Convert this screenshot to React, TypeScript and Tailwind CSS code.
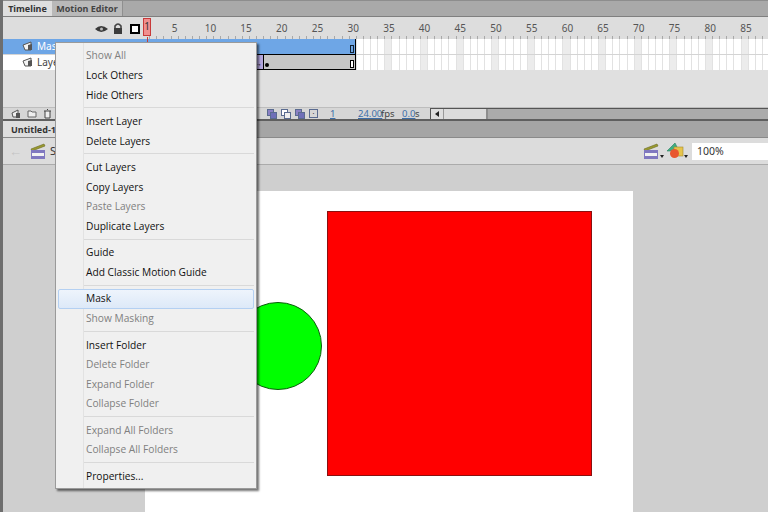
import React from 'react';

const FRAME_W = 'w-[7.14px] shrink-0';
const frames = Array.from({ length: 89 }, (_, i) => i + 1);
const rulerLabels = [5, 10, 15, 20, 25, 30, 35, 40, 45, 50, 55, 60, 65, 70, 75, 80, 85];

const menuGroups: { label: string; disabled?: boolean; hover?: boolean }[][] = [
  [{ label: 'Show All', disabled: true }, { label: 'Lock Others' }, { label: 'Hide Others' }],
  [{ label: 'Insert Layer' }, { label: 'Delete Layers' }],
  [{ label: 'Cut Layers' }, { label: 'Copy Layers' }, { label: 'Paste Layers', disabled: true }, { label: 'Duplicate Layers' }],
  [{ label: 'Guide' }, { label: 'Add Classic Motion Guide' }],
  [{ label: 'Mask', hover: true }, { label: 'Show Masking', disabled: true }],
  [{ label: 'Insert Folder' }, { label: 'Delete Folder', disabled: true }, { label: 'Expand Folder', disabled: true }, { label: 'Collapse Folder', disabled: true }],
  [{ label: 'Expand All Folders', disabled: true }, { label: 'Collapse All Folders', disabled: true }],
  [{ label: 'Properties...' }],
];

function LayerIcon() {
  return (
    <svg width="12" height="12" viewBox="0 0 12 12" className="shrink-0">
      <path d="M1 5 L9 2 V10 H3 Z" fill="#f4f4f4" stroke="#555" strokeWidth="1" />
      <path d="M6 5 V10 H10 V4" fill="#555" />
    </svg>
  );
}

function ContextMenu() {
  return (
    <div className="absolute left-[55px] top-[42px] w-[202px] h-[447px] pt-[3.2px] bg-[#f0f0f0] border border-[#9a9a9a] shadow-[2px_2px_2px_rgba(0,0,0,0.55)] font-['Open_Sans',sans-serif] text-[10.2px]">
      <div className="absolute left-[27px] top-0 bottom-0 w-px bg-[#e2e2e2]" />
      {menuGroups.map((group, g) => (
        <div key={g}>
          {g > 0 && (
            <div className="h-[6.9px] flex items-center pl-[28px] pr-[2px]">
              <div className="w-full h-[2px] border-t border-[#d9d9d9] border-b-white" />
            </div>
          )}
          {group.map((item) => (
            <div
              key={item.label}
              className={`relative h-[19.6px] flex items-center pl-[30px] ${item.disabled ? 'text-[#808080]' : 'text-[#111]'}`}
            >
              {item.hover && (
                <div className="absolute left-[2px] right-[2px] top-0 bottom-0 rounded-[2px] border border-[#b4d0f2] bg-gradient-to-b from-[#eef4fc] to-[#dde9f8]" />
              )}
              <span className="relative">{item.label}</span>
            </div>
          ))}
        </div>
      ))}
    </div>
  );
}

function FrameRow({ border }: { border?: boolean }) {
  return (
    <div className={`flex h-[15.5px] ${border ? 'border-b border-[#d4d4d4]' : ''}`}>
      {frames.map((f) => (
        <div
          key={f}
          className={`${FRAME_W} h-full border-r border-[#e2e2e2] ${f % 5 === 0 ? 'bg-[#ececec]' : 'bg-white'}`}
        />
      ))}
    </div>
  );
}

function Timeline() {
  return (
    <div className="h-[121px] flex flex-col bg-[#e0e0e0] shrink-0">
      {/* tabs */}
      <div className="h-[16px] flex bg-[#a9a9a9] border-t border-[#8d8d8d] text-[9px] font-bold leading-none shrink-0">
        <div className="w-[49px] h-full bg-[#dedede] text-[#333] flex items-center justify-center">Timeline</div>
        <div className="w-[71px] h-full bg-[#b9b9b9] text-[#444] flex items-center justify-center border-r border-[#8f8f8f]">Motion Editor</div>
      </div>

      {/* ruler */}
      <div className="relative h-[23px] bg-[#dddddd] border-t border-[#7f7f7f] shrink-0">
        <div className="absolute left-[92px] top-[8px]">
          <svg width="13" height="8" viewBox="0 0 13 8"><path d="M0 4 Q6 -2 13 4 Q6 10 0 4Z" fill="#3a3a3a" /><circle cx="6.5" cy="4" r="1.5" fill="#bbb" /></svg>
        </div>
        <div className="absolute left-[110px] top-[6px]">
          <svg width="10" height="11" viewBox="0 0 10 11"><path d="M2 5 V3 Q5 -1 8 3 V5" fill="none" stroke="#444" strokeWidth="1.6" /><rect x="1" y="5" width="8" height="6" fill="#3c3c3c" /></svg>
        </div>
        <div className="absolute left-[127px] top-[7px] w-[10px] h-[10px] border-2 border-black bg-white" />
        <div className="absolute left-[140px] right-0 top-[19px] flex h-[3px]">
          {frames.map((f) => (
            <div key={f} className={`${FRAME_W} border-r border-[#a8a8a8]`} />
          ))}
        </div>
        {rulerLabels.map((n) => (
          <span
            key={n}
            className="absolute top-[4px] -translate-x-1/2 text-[10px] leading-[14px] text-[#555]"
            style={{ left: 136 + n * 7.14 }}
          >
            {n}
          </span>
        ))}
        <div className="absolute left-[140px] top-[1px] w-[8px] h-[18px] bg-[#f08f8f] border border-[#c83a3a] text-[10px] leading-[15px] text-center text-[#333]">1</div>
      </div>

      {/* layers */}
      <div className="flex h-[31px] shrink-0 relative">
        <div className="w-[140px] shrink-0 flex flex-col text-[10px]">
          <div className="h-[15.5px] bg-[#6ea6e6] text-white flex items-center pl-[19px] gap-[3px] border-b border-[#d4d4d4]">
            <LayerIcon />
            <span>Mask</span>
          </div>
          <div className="h-[15.5px] bg-white text-[#444] flex items-center pl-[19px] gap-[3px]">
            <LayerIcon />
            <span>Layer 1</span>
          </div>
        </div>
        <div className="flex-1 overflow-hidden flex flex-col">
          <FrameRow border />
          <FrameRow />
        </div>
        {/* spans of frames */}
        <div className="absolute left-[140px] top-0 w-[213px] h-[16px] bg-[#6ea6e6] border-r border-b border-black">
          <div className="absolute right-[1px] bottom-[1px] w-[4px] h-[8px] border border-[#123] bg-[#6ea6e6]" />
        </div>
        <div className="absolute left-[140px] top-[16px] w-[213px] h-[15px] bg-[#c6c6c6] border-r border-b border-black">
          <div className="absolute left-[106px] top-0 bottom-0 w-[15px] bg-[#b3a6dc] border-r border-black flex items-end justify-end pr-[1px] text-[7px] leading-[10px] text-black">→</div>
          <div className="absolute left-[122px] bottom-[2px] w-[4px] h-[4px] rounded-full bg-black" />
          <div className="absolute right-[1px] bottom-[1px] w-[4px] h-[8px] border border-black bg-white" />
        </div>
        <div className="absolute left-[144px] top-[-2px] w-px h-[10px] bg-[#c83a3a]" />
      </div>

      <div className="flex-1" />

      {/* status */}
      <div className="h-[12px] flex bg-[#d6d6d6] border-t border-[#bdbdbd] shrink-0 relative text-[9.5px] leading-[12px]">
        <div className="absolute left-[8px] top-[1px] flex gap-[6px]">
          <LayerIconSmall />
          <svg width="10" height="9" viewBox="0 0 10 9"><path d="M1 2 H4 L5 3 H9 V8 H1Z" fill="#eee" stroke="#666" /></svg>
          <svg width="9" height="10" viewBox="0 0 9 10"><path d="M1 2 H8 M2 2 V9 H7 V2 M4 0.5 H5" fill="#eee" stroke="#444" /></svg>
        </div>
        <div className="absolute left-[264px] top-[1px] flex gap-[4px]">
          <OnionIcon dark />
          <OnionIcon />
          <OnionIcon dark />
          <div className="w-[9px] h-[9px] border border-[#5a6b90] text-[7px] leading-[7px] text-center text-[#333]">·</div>
        </div>
        <span className="absolute left-[327px] text-[#3d6ea8] underline">1</span>
        <span className="absolute left-[355px] text-[#3d6ea8] underline">24.00</span>
        <span className="absolute left-[378px] text-[#444]">fps</span>
        <span className="absolute left-[399px] text-[#3d6ea8] underline">0.0</span>
        <span className="absolute left-[412px] text-[#444]">s</span>
        <div className="absolute left-[427px] right-0 top-0 bottom-0 flex bg-[#ababab] border-t border-l border-[#555]">
          <div className="w-[13px] bg-[#dedede] border-r border-[#999] flex items-center justify-center">
            <div className="w-0 h-0 border-y-[3px] border-y-transparent border-r-[4px] border-r-[#222]" />
          </div>
          <div className="w-[44px] bg-[#dcdcdc] border-r-2 border-[#8e8e8e]" />
        </div>
      </div>
      <div className="h-[2px] bg-[#5f5f5f] shrink-0" />
    </div>
  );
}

function LayerIconSmall() {
  return (
    <svg width="10" height="10" viewBox="0 0 10 10"><path d="M1 4 L7 1 V8 H2Z" fill="#eee" stroke="#555" /><path d="M5 4 V9 H9 V4" fill="#555" /></svg>
  );
}

function OnionIcon({ dark }: { dark?: boolean }) {
  return (
    <svg width="10" height="10" viewBox="0 0 10 10">
      <rect x="0.5" y="0.5" width="6" height="6" fill={dark ? '#8a80c4' : '#fff'} stroke="#5a6b90" />
      <rect x="3.5" y="3.5" width="6" height="6" fill={dark ? '#6f6fb8' : '#eee'} stroke="#5a6b90" />
    </svg>
  );
}

function ClapperIcon() {
  return (
    <svg width="17" height="16" viewBox="0 0 17 16" className="shrink-0">
      <path d="M1 6 L14 1 L15 3 L2 8Z" fill="#9a9a30" stroke="#6a6a20" strokeWidth="0.6" />
      <rect x="1" y="7" width="14" height="9" fill="#8078c0" />
      <rect x="2" y="10" width="12" height="3" fill="#f2f2f2" />
    </svg>
  );
}

function SymbolIcon() {
  return (
    <svg width="17" height="16" viewBox="0 0 17 16" className="shrink-0">
      <path d="M0 8 L8 0 L12 8Z" fill="#3fae84" stroke="#2b7c5e" strokeWidth="0.6" />
      <rect x="7" y="4" width="9" height="9" fill="#e6c44c" stroke="#a58a2c" strokeWidth="0.6" />
      <circle cx="7.5" cy="10.5" r="4.5" fill="#e8562e" />
    </svg>
  );
}

function Caret() {
  return <div className="w-0 h-0 mb-[2px] self-end border-x-[2px] border-x-transparent border-t-[3px] border-t-[#222]" />;
}

function Document() {
  return (
    <div className="flex-1 flex flex-col min-h-0">
      <div className="h-[17px] flex bg-[#a5a5a5] border-b border-[#8a8a8a] shrink-0">
        <div className="w-[60px] h-full bg-[#dedede] text-[#333] text-[9px] font-bold leading-none flex items-center pl-[8px]">Untitled-1</div>
      </div>
      <div className="h-[27px] flex items-center bg-[#dcdcdc] border-b border-[#ababab] shrink-0">
        <span className="ml-[6px] text-[#c4c4c4] text-[13px] leading-none font-bold">←</span>
        <div className="ml-[8px]"><ClapperIcon /></div>
        <span className="ml-[3px] text-[11px] text-[#333]">Scene 1</span>
        <div className="ml-auto flex items-center h-[18px]">
          <ClapperIcon />
          <Caret />
          <div className="ml-[3px]"><SymbolIcon /></div>
          <Caret />
          <div className="ml-[4px] w-[76px] h-[17px] bg-white pl-[5px] text-[10.5px] leading-[17px] text-[#333]">100%</div>
        </div>
      </div>
      <div className="flex-1 relative bg-[#cfcfcf] overflow-hidden">
        <div className="absolute left-[142px] top-[26px] w-[488px] h-[340px] bg-white" />
        <div className="absolute left-[231px] top-[137px] w-[88px] h-[88px] rounded-full bg-[#00ff00] border border-[#0c5c0c]" />
        <div className="absolute left-[324px] top-[46px] w-[265px] h-[265px] bg-[#ff0000] border border-[#8a1010]" />
      </div>
    </div>
  );
}

export default function App() {
  return (
    <div className="relative w-[768px] h-[512px] overflow-hidden flex bg-[#cfcfcf] font-['Noto_Sans',sans-serif]">
      <div className="w-[3px] shrink-0 bg-[#6e6e6e]" />
      <div className="flex-1 min-w-0 flex flex-col relative">
        <Timeline />
        <Document />
      </div>
      <ContextMenu />
    </div>
  );
}
